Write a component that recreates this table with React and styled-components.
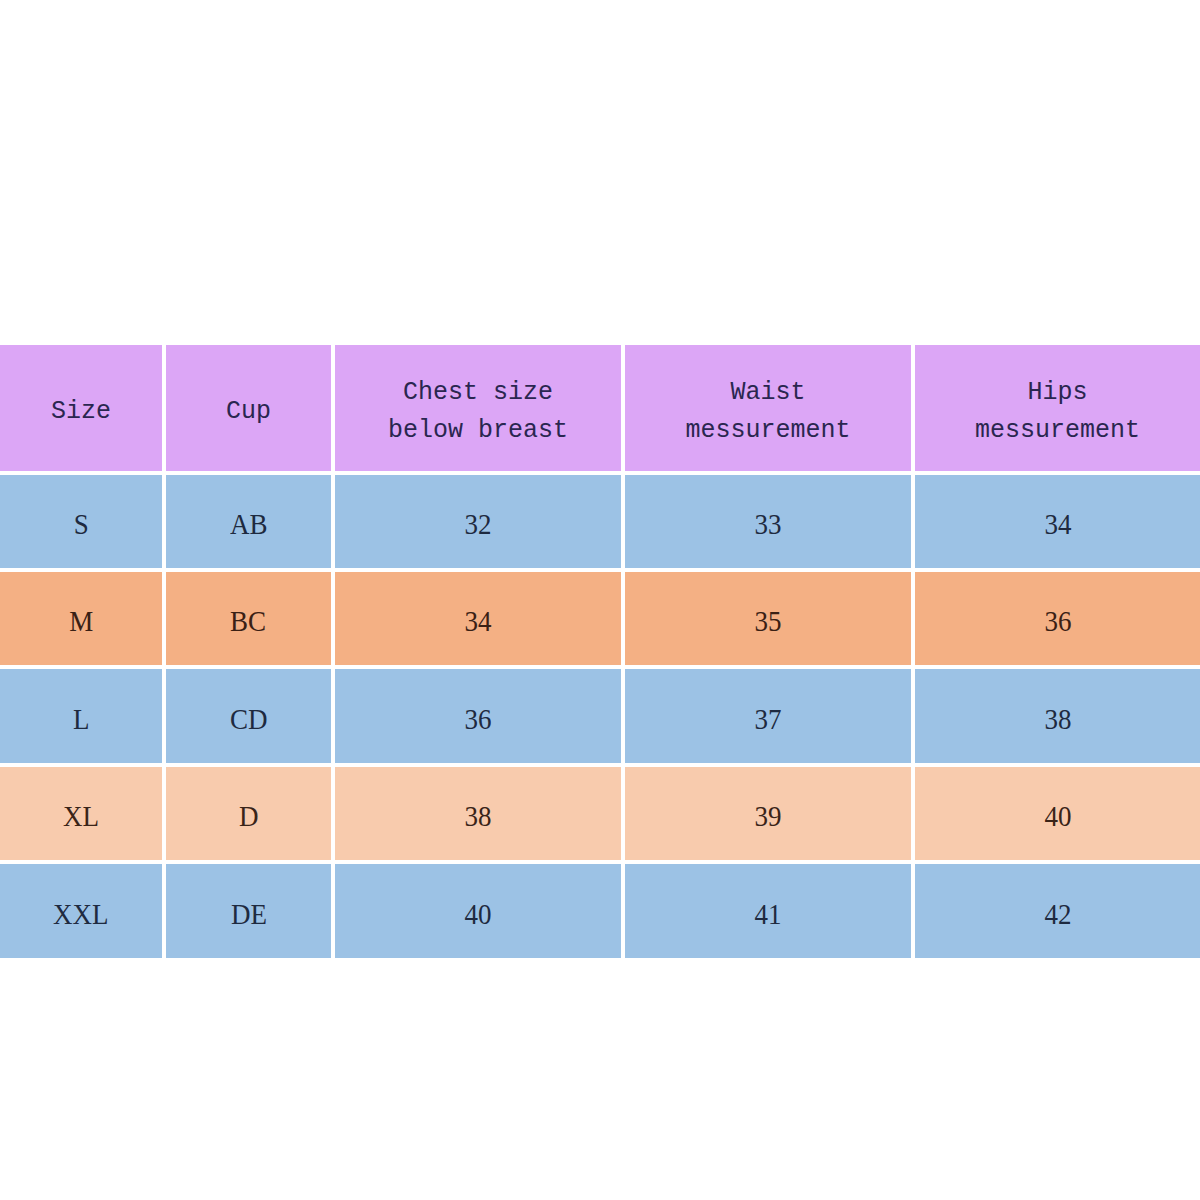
import React from "react";
import styled, { createGlobalStyle } from "styled-components";

const GlobalStyle = createGlobalStyle`
  html, body {
    margin: 0;
    padding: 0;
    background: #ffffff;
  }
`;

const Page = styled.div`
  width: 1200px;
  height: 1200px;
  padding-top: 345px;
  box-sizing: border-box;
  background: #ffffff;
`;

const Table = styled.div`
  display: grid;
  grid-template-columns: 162px 165px 286px 286px 285px;
  grid-template-rows: 126px 93px 93px 94px 93px 94px;
  column-gap: 4px;
  row-gap: 4px;
  width: 1200px;
`;

const HeadCell = styled.div`
  background: #dca6f6;
  display: flex;
  align-items: center;
  justify-content: center;
  text-align: center;
  padding-top: 8px;
  box-sizing: border-box;
  font-family: "Liberation Mono", "DejaVu Sans Mono", monospace;
  font-size: 25px;
  line-height: 38px;
  color: #2a2650;
  white-space: pre-line;
`;

const palette = {
  blue: { bg: "#9cc2e5", fg: "#1e2a40" },
  orange: { bg: "#f4b084", fg: "#3a2014" },
  peach: { bg: "#f8cbad", fg: "#3a2418" },
};

const Cell = styled.div`
  background: ${(props) => palette[props.tone].bg};
  color: ${(props) => palette[props.tone].fg};
  display: flex;
  align-items: center;
  justify-content: center;
  padding-top: 5px;
  box-sizing: border-box;
  font-family: "Liberation Serif", "DejaVu Serif", serif;
  font-size: 30px;

  span {
    display: inline-block;
    transform: scaleX(0.9);
  }
`;

const headers = ["Size", "Cup", "Chest size\nbelow breast", "Waist\nmessurement", "Hips\nmessurement"];

const rows = [
  { tone: "blue", values: ["S", "AB", "32", "33", "34"] },
  { tone: "orange", values: ["M", "BC", "34", "35", "36"] },
  { tone: "blue", values: ["L", "CD", "36", "37", "38"] },
  { tone: "peach", values: ["XL", "D", "38", "39", "40"] },
  { tone: "blue", values: ["XXL", "DE", "40", "41", "42"] },
];

export default function App() {
  return (
    <>
      <GlobalStyle />
      <Page>
        <Table>
          {headers.map((h) => (
            <HeadCell key={h}>{h}</HeadCell>
          ))}
          {rows.map((row) =>
            row.values.map((v, i) => (
              <Cell key={row.values[0] + i} tone={row.tone}>
                <span>{v}</span>
              </Cell>
            ))
          )}
        </Table>
      </Page>
    </>
  );
}
